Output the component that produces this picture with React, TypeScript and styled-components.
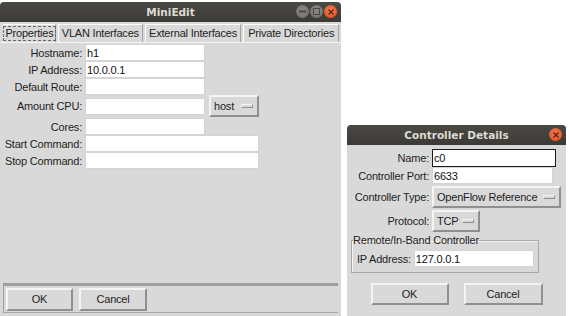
import React from 'react'
import styled, { createGlobalStyle } from 'styled-components'

const GlobalStyle = createGlobalStyle`
  html, body {
    margin: 0;
    padding: 0;
    background: #ffffff;
  }
  body {
    font-family: 'Liberation Sans', 'DejaVu Sans', sans-serif;
    font-size: 11px;
    letter-spacing: -0.2px;
    color: #1e1e1e;
  }
`

const Desktop = styled.div`
  display: flex;
  align-items: flex-start;
  gap: 6px;
  padding-top: 2px;
  width: 569px;
  height: 316px;
  overflow: hidden;
  box-sizing: border-box;
`

const Window = styled.div<{ $width: number; $height: number; $top?: number }>`
  width: ${({ $width }) => $width}px;
  height: ${({ $height }) => $height}px;
  margin-top: ${({ $top = 0 }) => $top}px;
  background: #d9d9d9;
  display: flex;
  flex-direction: column;
  flex-shrink: 0;
  border-radius: 4px 4px 0 0;
  overflow: hidden;
`

const TitleBar = styled.div`
  height: 20px;
  flex-shrink: 0;
  position: relative;
  display: flex;
  align-items: center;
  justify-content: center;
  background: linear-gradient(#4a4944, #3b3a36);
  color: #dfdbd2;
  font-family: 'DejaVu Sans', sans-serif;
  font-weight: bold;
  font-size: 10.5px;
  letter-spacing: 0;
`

const TitleButtons = styled.div`
  position: absolute;
  right: 4px;
  top: 3px;
  display: flex;
  gap: 1px;
`

const Circle = styled.div<{ $close?: boolean }>`
  width: 13px;
  height: 13px;
  border-radius: 50%;
  background: ${({ $close }) =>
    $close
      ? 'radial-gradient(circle at 50% 40%, #f47a4e, #df4f1f)'
      : 'radial-gradient(circle at 50% 40%, #8a8984, #6e6d68)'};
  display: flex;
  align-items: center;
  justify-content: center;
`

const TabRow = styled.div`
  display: flex;
  gap: 2px;
  padding: 2px 2px 0 3px;
  height: 18px;
  border-bottom: 1px solid #f4f4f4;
`

const Tab = styled.div<{ $w: number; $active?: boolean }>`
  width: ${({ $w }) => $w}px;
  box-sizing: border-box;
  display: flex;
  align-items: center;
  justify-content: center;
  background: #d9d9d9;
  border-top: 1px solid #ffffff;
  border-left: 1px solid #ffffff;
  border-right: 1px solid #a3a3a3;
  white-space: nowrap;
  color: #1e1e1e;
  & > span {
    border: ${({ $active }) => ($active ? '1px dashed #6a6a6a' : '1px solid transparent')};
    padding: 0 1px;
    line-height: 13px;
  }
`

const Panel = styled.div`
  flex: 1;
  padding: 1px 0 0 0;
`

const Form = styled.div<{ $label: number }>`
  display: grid;
  grid-template-columns: ${({ $label }) => $label}px auto;
  align-items: center;
  justify-items: start;
`

const Label = styled.div`
  justify-self: end;
  padding-right: 3px;
  white-space: nowrap;
`

const Field = styled.div`
  display: flex;
  align-items: center;
  gap: 4px;
`

const Entry = styled.div<{ $w: number; $focus?: boolean }>`
  width: ${({ $w }) => $w}px;
  height: ${({ $focus }) => ($focus ? 18 : 17)}px;
  box-sizing: border-box;
  background: #ffffff;
  border: 1px solid ${({ $focus }) => ($focus ? '#1a1a1a' : '#d4d4d4')};
  padding: 0 1px;
  display: flex;
  align-items: center;
  color: #111;
  white-space: nowrap;
`

const MenuButton = styled.div<{ $w: number; $gapY?: number }>`
  width: ${({ $w }) => $w}px;
  height: 22px;
  box-sizing: border-box;
  border-top: 2px solid #f4f4f4;
  border-left: 2px solid #f4f4f4;
  border-right: 2px solid #8f8f8f;
  border-bottom: 2px solid #8f8f8f;
  display: flex;
  align-items: center;
  justify-content: space-between;
  padding: 0 4px 0 3px;
  margin: ${({ $gapY = 0 }) => `${$gapY}px 0`};
  white-space: nowrap;
`

const Indicator = styled.span`
  width: 12px;
  height: 4px;
  box-sizing: border-box;
  border-top: 1px solid #f4f4f4;
  border-left: 1px solid #f4f4f4;
  border-bottom: 1px solid #8f8f8f;
  border-right: 1px solid #8f8f8f;
`

const Spacer = styled.div<{ $h: number }>`
  grid-column: 1 / -1;
  height: ${({ $h }) => $h}px;
`

const ButtonBar = styled.div`
  margin: 0 3px 3px 3px;
  height: 30px;
  box-sizing: border-box;
  border-top: 3px solid #9f9f9f;
  border-left: 1px solid #9f9f9f;
  border-bottom: 1px solid #a8a8a8;
  display: flex;
  align-items: center;
  gap: 6px;
  padding: 0 0 0 2px;
`

const Button = styled.div<{ $w: number; $h?: number }>`
  width: ${({ $w }) => $w}px;
  height: ${({ $h = 23 }) => $h}px;
  box-sizing: border-box;
  border-top: 2px solid #f4f4f4;
  border-left: 2px solid #f4f4f4;
  border-right: 2px solid #8f8f8f;
  border-bottom: 2px solid #8f8f8f;
  display: flex;
  align-items: center;
  justify-content: center;
`

const Group = styled.fieldset`
  margin: 2px 28px 0 4px;
  padding: 4px 4px 5px 5px;
  border: 1px solid #a8a8a8;
  box-shadow: 1px 1px 0 #f4f4f4 inset;
  display: flex;
  align-items: center;
  & > legend {
    padding: 0;
    margin-left: -4px;
  }
`

const DialogButtons = styled.div`
  display: flex;
  justify-content: center;
  gap: 15px;
  margin-top: 10px;
`

const DialogBody = styled.div`
  padding: 4px 0 0 0;
`

function WindowButtons({ full }: { full: boolean }) {
  return (
    <TitleButtons>
      {full && (
        <>
          <Circle>
            <svg width="7" height="7" viewBox="0 0 7 7">
              <rect x="0" y="2.5" width="7" height="2" fill="#4a4944" />
            </svg>
          </Circle>
          <Circle>
            <svg width="7" height="7" viewBox="0 0 7 7">
              <rect x="0.5" y="0.5" width="6" height="6" fill="none" stroke="#4a4944" />
            </svg>
          </Circle>
        </>
      )}
      <Circle $close>
        <svg width="6" height="6" viewBox="0 0 6 6">
          <path d="M0.5 0.5 L5.5 5.5 M5.5 0.5 L0.5 5.5" stroke="#5a2010" strokeWidth="1.3" />
        </svg>
      </Circle>
    </TitleButtons>
  )
}

export default function App() {
  return (
    <>
      <GlobalStyle />
      <Desktop>
        <Window $width={341} $height={314}>
          <TitleBar>
            MiniEdit
            <WindowButtons full />
          </TitleBar>
          <TabRow>
            <Tab $w={53} $active>
              <span>Properties</span>
            </Tab>
            <Tab $w={85}>
              <span>VLAN Interfaces</span>
            </Tab>
            <Tab $w={97}>
              <span>External Interfaces</span>
            </Tab>
            <Tab $w={96}>
              <span>Private Directories</span>
            </Tab>
          </TabRow>
          <Panel>
            <Form $label={85}>
              <Label>Hostname:</Label>
              <Entry $w={120}>h1</Entry>
              <Label>IP Address:</Label>
              <Entry $w={120}>10.0.0.1</Entry>
              <Label>Default Route:</Label>
              <Entry $w={120} />
              <Label>Amount CPU:</Label>
              <Field>
                <Entry $w={120} />
                <MenuButton $w={50}>
                  host
                  <Indicator />
                </MenuButton>
              </Field>
              <Spacer $h={1} />
              <Label>Cores:</Label>
              <Entry $w={120} />
              <Label>Start Command:</Label>
              <Entry $w={174} />
              <Label>Stop Command:</Label>
              <Entry $w={174} />
            </Form>
          </Panel>
          <ButtonBar>
            <Button $w={67}>OK</Button>
            <Button $w={68}>Cancel</Button>
          </ButtonBar>
        </Window>
        <Window $width={219} $height={191} $top={123}>
          <TitleBar>
            Controller Details
            <WindowButtons full={false} />
          </TitleBar>
          <DialogBody>
            <Form $label={85}>
              <Label>Name:</Label>
              <Entry $w={124} $focus>
                c0
              </Entry>
              <Label>Controller Port:</Label>
              <Entry $w={121}>6633</Entry>
              <Label>Controller Type:</Label>
              <MenuButton $w={129} $gapY={2}>
                OpenFlow Reference
                <Indicator />
              </MenuButton>
              <Label>Protocol:</Label>
              <MenuButton $w={48}>
                TCP
                <Indicator />
              </MenuButton>
            </Form>
            <Group>
              <legend>Remote/In-Band Controller</legend>
              <Label>IP Address:</Label>
              <Entry $w={120}>127.0.0.1</Entry>
            </Group>
            <DialogButtons>
              <Button $w={78} $h={22}>OK</Button>
              <Button $w={79} $h={22}>Cancel</Button>
            </DialogButtons>
          </DialogBody>
        </Window>
      </Desktop>
    </>
  )
}
